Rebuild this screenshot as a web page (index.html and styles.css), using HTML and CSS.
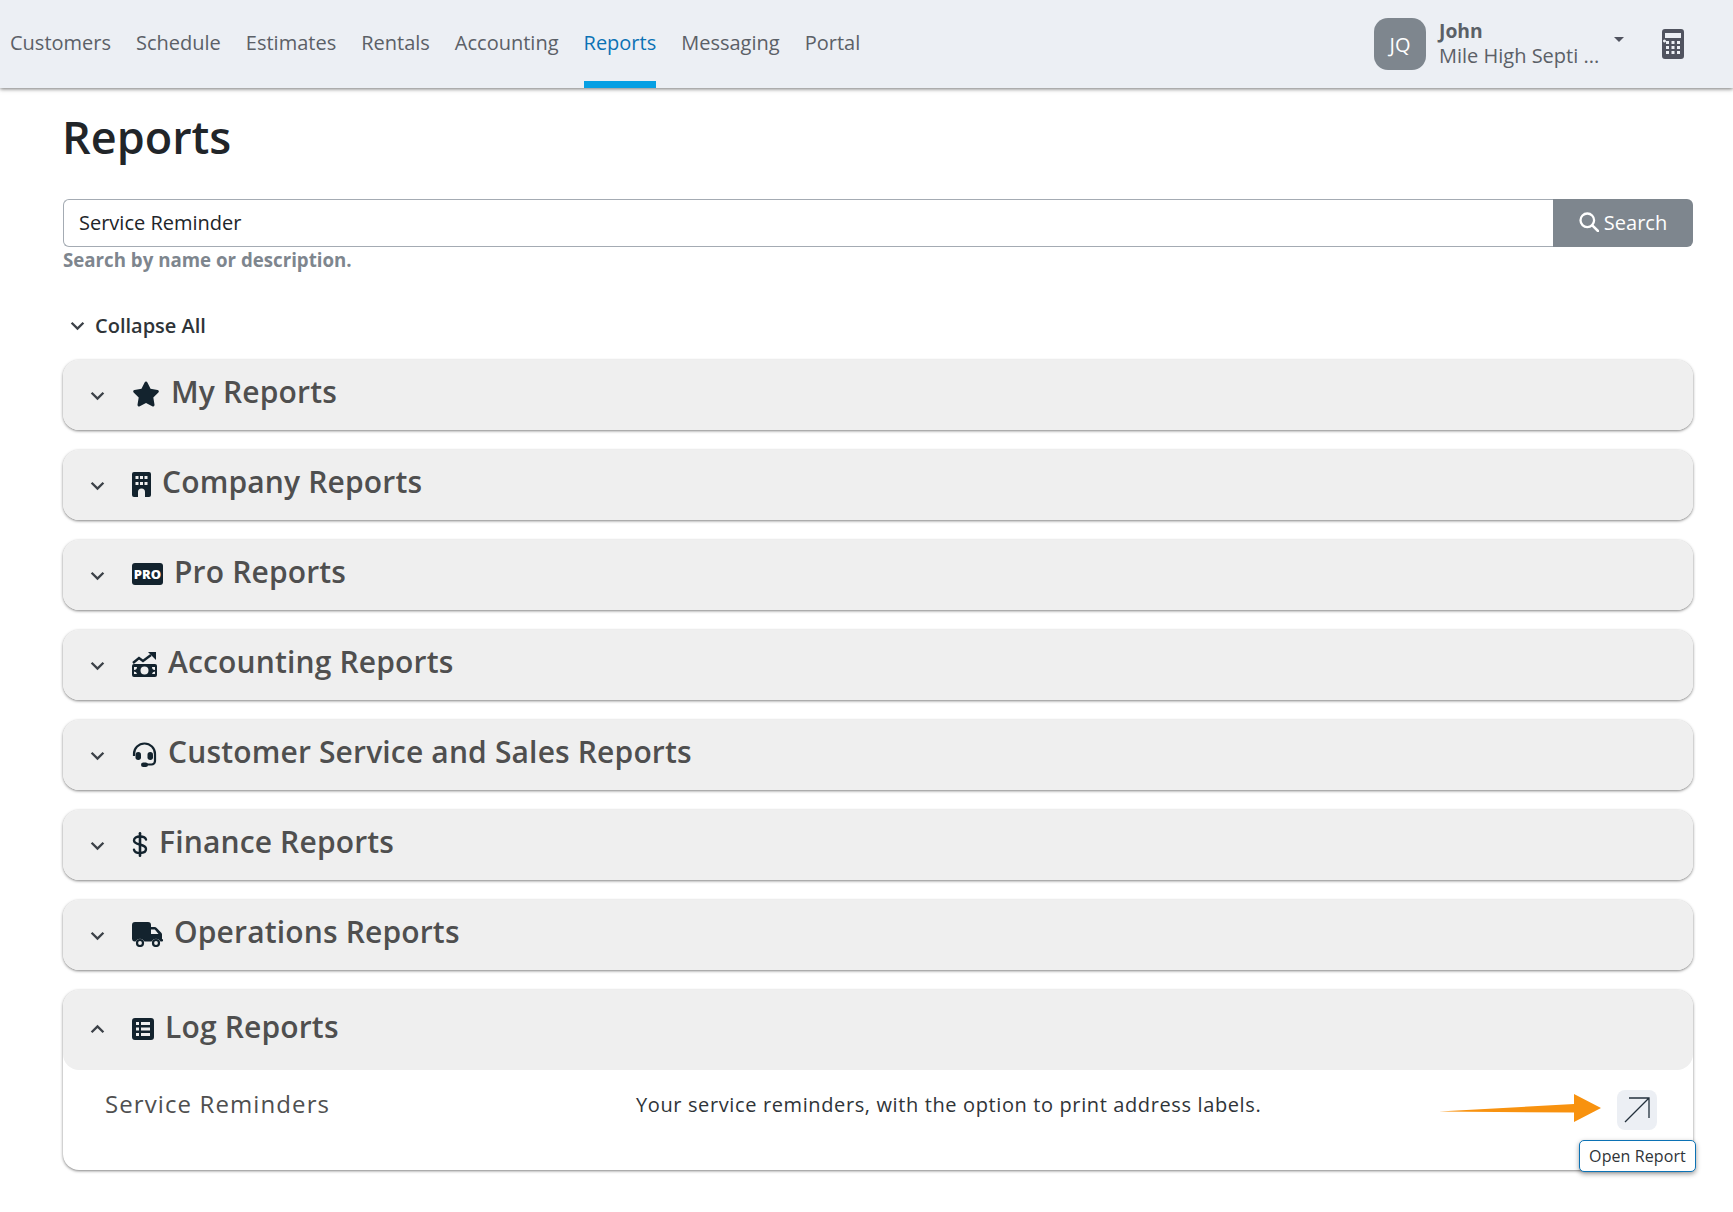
FILE: index.html
```html
<!DOCTYPE html>
<html lang="en">
<head>
    <meta charset="UTF-8">
    <meta name="viewport" content="width=device-width, initial-scale=1.0">
    <title>Reports</title>
    <link rel="stylesheet" href="styles.css">
</head>
<body>

    <header class="topbar">
        <nav class="nav">
            <a class="nav-link">Customers</a>
            <a class="nav-link">Schedule</a>
            <a class="nav-link">Estimates</a>
            <a class="nav-link">Rentals</a>
            <a class="nav-link">Accounting</a>
            <a class="nav-link active">Reports</a>
            <a class="nav-link">Messaging</a>
            <a class="nav-link">Portal</a>
        </nav>
        <div class="user">
            <div class="avatar">JQ</div>
            <div class="user-text">
                <div class="user-name">John</div>
                <div class="user-company">Mile High Septi ...</div>
            </div>
            <span class="caret"></span>
            <svg class="calc" viewBox="0 0 22 30"><path fill="#50535f" fill-rule="evenodd" d="M3 0h16a3 3 0 0 1 3 3v24a3 3 0 0 1-3 3H3a3 3 0 0 1-3-3V3a3 3 0 0 1 3-3zm0 4v5h16V4zm1 8a1.500 1.500 0 1 0 0 .1zm0 0h3v3H4zm5.500 0h3v3h-3zm5.500 0h3v3h-3zM4 17h3v3H4zm5.500 0h3v3h-3zm5.500 0h3v3h-3zM4 22h3v3H4zm5.500 0h3v3h-3zm5.500 0h3v3h-3z"/></svg>
        </div>
    </header>

    <main class="page">
        <h1>Reports</h1>

        <div class="search">
            <input class="search-input" type="text" value="Service Reminder">
            <button class="search-button">
                <svg class="search-icon" viewBox="0 0 20 20"><circle cx="8.300" cy="8.300" r="6.800" fill="none" stroke="#fff" stroke-width="2.300"/><path d="M13.300 13.300L19 19" stroke="#fff" stroke-width="2.500" stroke-linecap="round"/></svg>
                Search
            </button>
        </div>
        <div class="help">Search by name or description.</div>

        <div class="collapse-all">
            <svg class="chevron small" viewBox="0 0 14 9"><path d="M1.500 1.500L7 7l5.500-5.500"/></svg>
            Collapse All
        </div>

        <section class="card">
            <div class="card-head">
                <svg class="chevron" viewBox="0 0 14 9"><path d="M1.500 1.500L7 7l5.500-5.500"/></svg>
                <svg class="icon icon-star" viewBox="0 0 576 512"><path d="M316.900 18C311.600 7 300.400 0 288.100 0s-23.400 7-28.800 18L195 150.300 51.400 171.500c-12 1.800-22 10.200-25.700 21.700s-.7 24.200 7.900 32.700L137.800 329 113.200 474.700c-2 12 3 24.200 12.900 31.300s23 8 33.800 2.300l128.300-68.500 128.300 68.500c10.800 5.700 23.900 4.900 33.800-2.300s14.900-19.300 12.900-31.300L438.500 329 542.700 225.900c8.600-8.500 11.700-21.200 7.900-32.700s-13.700-19.900-25.700-21.700L381.200 150.300 316.900 18z"/></svg>
                <h2>My Reports</h2>
            </div>
        </section>

        <section class="card">
            <div class="card-head">
                <svg class="chevron" viewBox="0 0 14 9"><path d="M1.500 1.500L7 7l5.500-5.500"/></svg>
                <svg class="icon icon-building" viewBox="0 0 19 25"><path fill-rule="evenodd" d="M2 0h15a2 2 0 0 1 2 2v21a2 2 0 0 1-2 2h-4v-5a3.500 3.500 0 0 0-7 0v5H2a2 2 0 0 1-2-2V2a2 2 0 0 1 2-2zm1.500 4v3h3V4zm4.500 0v3h3V4zm4.500 0v3h3V4zM3.500 10v3h3v-3zm4.500 0v3h3v-3zm4.500 0v3h3v-3z"/></svg>
                <h2>Company Reports</h2>
            </div>
        </section>

        <section class="card">
            <div class="card-head">
                <svg class="chevron" viewBox="0 0 14 9"><path d="M1.500 1.500L7 7l5.500-5.500"/></svg>
                <span class="icon-pro">PRO</span>
                <h2>Pro Reports</h2>
            </div>
        </section>

        <section class="card">
            <div class="card-head">
                <svg class="chevron" viewBox="0 0 14 9"><path d="M1.500 1.500L7 7l5.500-5.500"/></svg>
                <svg class="icon icon-money" viewBox="0 0 25 25"><path fill-rule="evenodd" d="M2 12h21a2 2 0 0 1 2 2v9a2 2 0 0 1-2 2H2a2 2 0 0 1-2-2v-9a2 2 0 0 1 2-2zm10.500 2.500a4 4 0 1 0 0 8 4 4 0 0 0 0-8zM2 15v3a3 3 0 0 0 3-3zm18 0a3 3 0 0 0 3 3v-3zM2 19.500V22h3a3 3 0 0 0-3-2.500zm21 0a3 3 0 0 0-3 2.500h3z"/><path d="M1 11l6-5 4 3 8-6" fill="none" stroke="#13232e" stroke-width="2.400"/><path d="M16 0h8v8z"/></svg>
                <h2>Accounting Reports</h2>
            </div>
        </section>

        <section class="card">
            <div class="card-head">
                <svg class="chevron" viewBox="0 0 14 9"><path d="M1.500 1.500L7 7l5.500-5.500"/></svg>
                <svg class="icon icon-headset" viewBox="0 0 25 25"><path d="M2 14v-2a10.500 10.500 0 0 1 21 0v7a3.500 3.500 0 0 1-3.500 3.500H14" fill="none" stroke="#13232e" stroke-width="2.200"/><rect x="3.500" y="10" width="5.500" height="8" rx="2.700"/><rect x="15.500" y="10" width="5.500" height="8" rx="2.700"/><rect x="9" y="20.500" width="7" height="4.500" rx="2.200"/></svg>
                <h2>Customer Service and Sales Reports</h2>
            </div>
        </section>

        <section class="card">
            <div class="card-head">
                <svg class="chevron" viewBox="0 0 14 9"><path d="M1.500 1.500L7 7l5.500-5.500"/></svg>
                <svg class="icon icon-dollar" viewBox="0 0 16 25"><path d="M14 7.500C13.500 5.500 11 4.500 8 4.500 4.500 4.500 2 6 2 8.500c0 5.500 12 2.500 12 8.500 0 2.500-2.500 4-6 4-3.200 0-5.500-1-6-3.300" fill="none" stroke="#13232e" stroke-width="2.400" stroke-linecap="round"/><rect x="6.700" y="0" width="2.600" height="25" rx="1.300"/></svg>
                <h2>Finance Reports</h2>
            </div>
        </section>

        <section class="card">
            <div class="card-head">
                <svg class="chevron" viewBox="0 0 14 9"><path d="M1.500 1.500L7 7l5.500-5.500"/></svg>
                <svg class="icon icon-truck" viewBox="0 0 31 25"><path fill-rule="evenodd" d="M3 0h13a3 3 0 0 1 3 3v2h3.500a3 3 0 0 1 2.200 1L29.500 11a3 3 0 0 1 .5 1.500V17a1.200 1.200 0 0 1 0 2.500h-1.500a5 5 0 0 0-9 0h-7a5 5 0 0 0-9 0A3 3 0 0 1 0 17V3a3 3 0 0 1 3-3zm16 7.500V12h7.500l-3.700-4.500z"/><circle cx="8" cy="21" r="3" fill="#efefef" stroke="#13232e" stroke-width="2.200"/><circle cx="24" cy="21" r="3" fill="#efefef" stroke="#13232e" stroke-width="2.200"/></svg>
                <h2>Operations Reports</h2>
            </div>
        </section>

        <section class="card open">
            <div class="card-head">
                <svg class="chevron" viewBox="0 0 14 9"><path d="M1.500 7.500L7 2l5.500 5.500"/></svg>
                <svg class="icon icon-list" viewBox="0 0 22 22"><path fill-rule="evenodd" d="M3 0h16a3 3 0 0 1 3 3v16a3 3 0 0 1-3 3H3a3 3 0 0 1-3-3V3a3 3 0 0 1 3-3zm1 4v3h3V4zm5 0v3h9V4zM4 9.500v3h3v-3zm5 0v3h9v-3zM4 15v3h3v-3zm5 0v3h9v-3z"/></svg>
                <h2>Log Reports</h2>
            </div>
            <div class="report-row">
                <div class="report-name">Service Reminders</div>
                <div class="report-desc">Your service reminders, with the option to print address labels.</div>
                <div class="report-action">
                    <svg class="annotation" viewBox="0 0 162 28" preserveAspectRatio="none"><path fill="#f8920f" d="M0 17.500L135 10V0l27 14-27 14V18.500z"/></svg>
                    <button class="open-button">
                        <svg viewBox="0 0 26 26"><path d="M1 25L25 1M5 1h20v20" fill="none" stroke="#23303c" stroke-width="1.300"/></svg>
                    </button>
                    <div class="tooltip">Open Report</div>
                </div>
            </div>
        </section>
    </main>

</body>
</html>
```

FILE: styles.css
```css
* {
    margin: 0;
    padding: 0;
    box-sizing: border-box;
}

body {
    font-family: "Open Sans", sans-serif;
    background: #fff;
    color: #212529;
    min-height: 100vh;
}

.topbar {
    height: 88px;
    background: #eceff4;
    box-shadow: 0 1px 4px rgba(0, 0, 0, 0.55);
    display: flex;
    justify-content: space-between;
    padding-left: 10px;
}

.nav {
    display: flex;
    gap: 25px;
}

.nav-link {
    font-size: 20px;
    line-height: 86px;
    color: #5b6067;
    height: 88px;
}

.nav-link.active {
    color: #0b72b5;
    border-bottom: 7px solid #069fe3;
}

.user {
    display: flex;
    align-items: center;
    padding-right: 49px;
}

.avatar {
    width: 52px;
    height: 52px;
    border-radius: 14px;
    background: #7e868e;
    color: #fff;
    font-size: 20px;
    display: flex;
    align-items: center;
    justify-content: center;
    margin-right: 13px;
}

.user-text {
    width: 175px;
    font-size: 20px;
    line-height: 25px;
    color: #5b6067;
    margin-bottom: 3px;
}

.user-name {
    font-weight: 700;
    font-size: 19.300px;
}

.caret {
    width: 0;
    height: 0;
    border-left: 5px solid transparent;
    border-right: 5px solid transparent;
    border-top: 5px solid #50535f;
    margin-bottom: 10px;
    margin-right: 38px;
}

.calc {
    width: 22px;
    height: 30px;
    margin-bottom: 1px;
}

.page {
    padding: 0 40px 0 63px;
}

h1 {
    font-size: 45px;
    font-weight: 600;
    line-height: 60px;
    margin-top: 19px;
    margin-left: -1px;
    color: #212529;
}

.search {
    display: flex;
    margin-top: 32px;
    height: 48px;
}

.search-input {
    flex: 1;
    font-family: inherit;
    font-size: 20px;
    color: #212529;
    padding: 0 15px 2px;
    border: 1px solid #a4abb3;
    border-right: none;
    border-radius: 6px 0 0 6px;
    outline: none;
}

.search-button {
    width: 140px;
    background: #7e868e;
    color: #fff;
    border: none;
    border-radius: 0 6px 6px 0;
    font-family: inherit;
    font-size: 20px;
    padding-bottom: 2px;
    display: flex;
    align-items: center;
    justify-content: center;
    gap: 5px;
}

.search-icon {
    width: 20px;
    height: 20px;
}

.help {
    font-size: 18.700px;
    font-weight: 700;
    color: #7e868e;
    line-height: 24px;
    margin-top: 1px;
}

.collapse-all {
    display: flex;
    align-items: center;
    gap: 10px;
    font-size: 20px;
    font-weight: 600;
    line-height: 28px;
    color: #2f3438;
    margin-top: 40px;
    padding-left: 7px;
}

.chevron {
    width: 15px;
    height: 10px;
    flex: none;
}

.chevron path {
    fill: none;
    stroke: #3c4148;
    stroke-width: 2.200;
}

.card {
    margin-top: 20px;
    border-radius: 16px;
    background: #fff;
    box-shadow: 0 1px 3px rgba(0, 0, 0, 0.5);
}

.card-head {
    height: 70px;
    background: #efefef;
    border-radius: 16px;
    display: flex;
    align-items: center;
    padding: 0 0 2px 27px;
}

.card-head .chevron {
    margin-right: 27px;
    margin-top: 3px;
}

.card-head h2 {
    font-size: 30px;
    font-weight: 600;
    color: #4f4f4f;
    letter-spacing: 0.160px;
    line-height: 40px;
    margin-top: -4px;
    margin-left: 1px;
}

.icon {
    fill: #13232e;
    flex: none;
    margin-right: 10px;
}

.icon-star {
    width: 28px;
    height: 26px;
}

.icon-building {
    width: 19px;
    height: 25px;
}

.icon-pro {
    background: #13232e;
    color: #fff;
    font-size: 13px;
    font-weight: 800;
    line-height: 22px;
    width: 31px;
    height: 22px;
    text-align: center;
    border-radius: 3px;
    margin-right: 10px;
    flex: none;
}

.icon-money {
    width: 25px;
    height: 25px;
}

.icon-headset {
    width: 25px;
    height: 25px;
}

.icon-dollar {
    width: 16px;
    height: 25px;
}

.icon-truck {
    width: 31px;
    height: 25px;
}

.icon-list {
    width: 22px;
    height: 22px;
}

.card.open .card-head {
    height: 80px;
}

.card.open .card-head .chevron {
    margin-top: 0;
}

.report-row {
    display: flex;
    height: 100px;
    padding-left: 42px;
}

.report-name {
    width: 531px;
    font-size: 24px;
    letter-spacing: 1.100px;
    line-height: 34px;
    color: #4f4f4f;
    margin-top: 17px;
}

.report-desc {
    font-size: 20px;
    letter-spacing: 0.620px;
    line-height: 30px;
    color: #2f3438;
    margin-top: 20px;
}

.report-action {
    position: relative;
    margin-left: auto;
    margin-right: 36px;
    margin-top: 20px;
}

.open-button {
    width: 40px;
    height: 40px;
    background: #eceff4;
    border: none;
    border-radius: 8px;
    display: flex;
    align-items: center;
    justify-content: center;
}

.open-button svg {
    width: 26px;
    height: 26px;
}

.annotation {
    position: absolute;
    right: 56px;
    top: 4px;
    width: 162px;
    height: 28px;
}

.tooltip {
    position: absolute;
    top: 50px;
    left: -38px;
    width: 117px;
    height: 32px;
    background: #fff;
    border: 1px solid #0b72b5;
    border-radius: 5px;
    box-shadow: 0 2px 5px rgba(0, 0, 0, 0.4);
    font-size: 16px;
    letter-spacing: 0.1px;
    line-height: 30px;
    text-align: center;
    color: #2f3438;
}
```
